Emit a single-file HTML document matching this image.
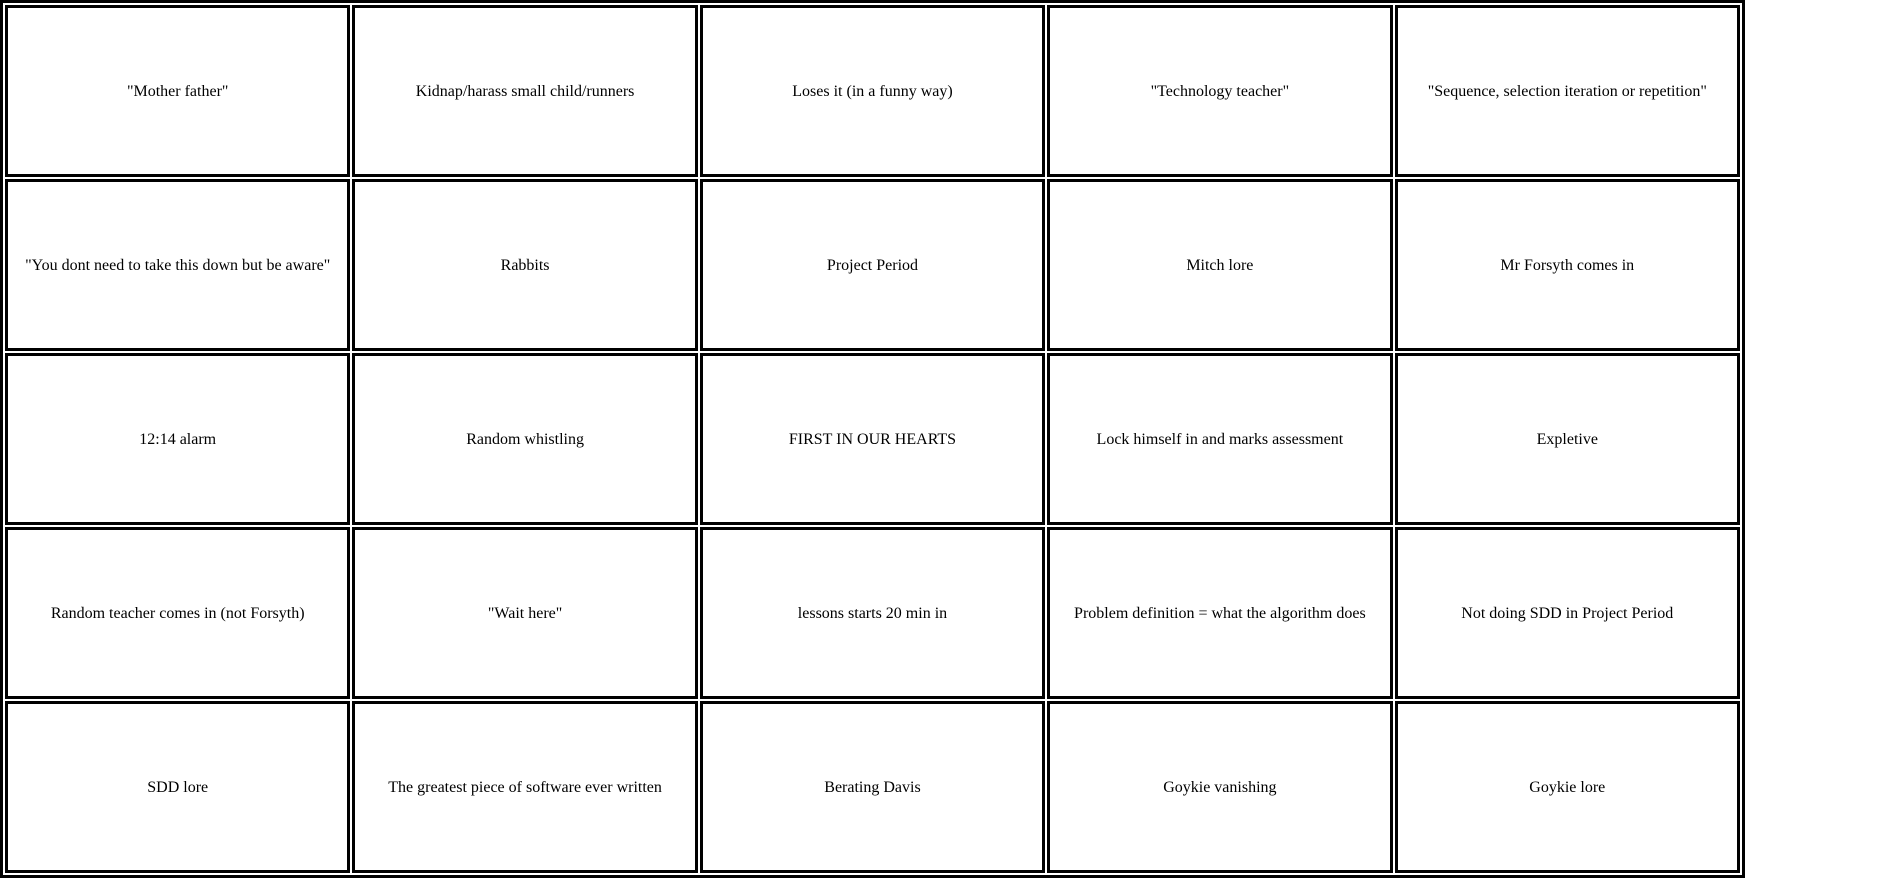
<!DOCTYPE html>
<html><head><meta charset="utf-8"><style>
html,body{margin:0;padding:0;background:#fff;width:1904px;height:877px;overflow:hidden;font-family:"Liberation Serif","Times New Roman",serif}
table{position:absolute;left:0;top:0;width:1745px;height:877px;border:3px solid #000;border-spacing:2px;table-layout:fixed;box-sizing:border-box;font-family:"Liberation Serif","Times New Roman",serif;font-size:16px;color:#000}
td{border:3px solid #000;text-align:center;vertical-align:middle;padding:2px 1px 0 1px;height:164px;font-family:"Liberation Serif","Times New Roman",serif;font-size:16px}
</style></head><body>
<table>
<tr><td>"Mother father"</td><td>Kidnap/harass small child/runners</td><td>Loses it (in a funny way)</td><td>"Technology teacher"</td><td>"Sequence, selection iteration or repetition"</td></tr>
<tr><td>"You dont need to take this down but be aware"</td><td>Rabbits</td><td>Project Period</td><td>Mitch lore</td><td>Mr Forsyth comes in</td></tr>
<tr><td>12:14 alarm</td><td>Random whistling</td><td>FIRST IN OUR HEARTS</td><td>Lock himself in and marks assessment</td><td>Expletive</td></tr>
<tr><td>Random teacher comes in (not Forsyth)</td><td>"Wait here"</td><td>lessons starts 20 min in</td><td>Problem definition = what the algorithm does</td><td>Not doing SDD in Project Period</td></tr>
<tr><td>SDD lore</td><td>The greatest piece of software ever written</td><td>Berating Davis</td><td>Goykie vanishing</td><td>Goykie lore</td></tr>
</table>
</body></html>
